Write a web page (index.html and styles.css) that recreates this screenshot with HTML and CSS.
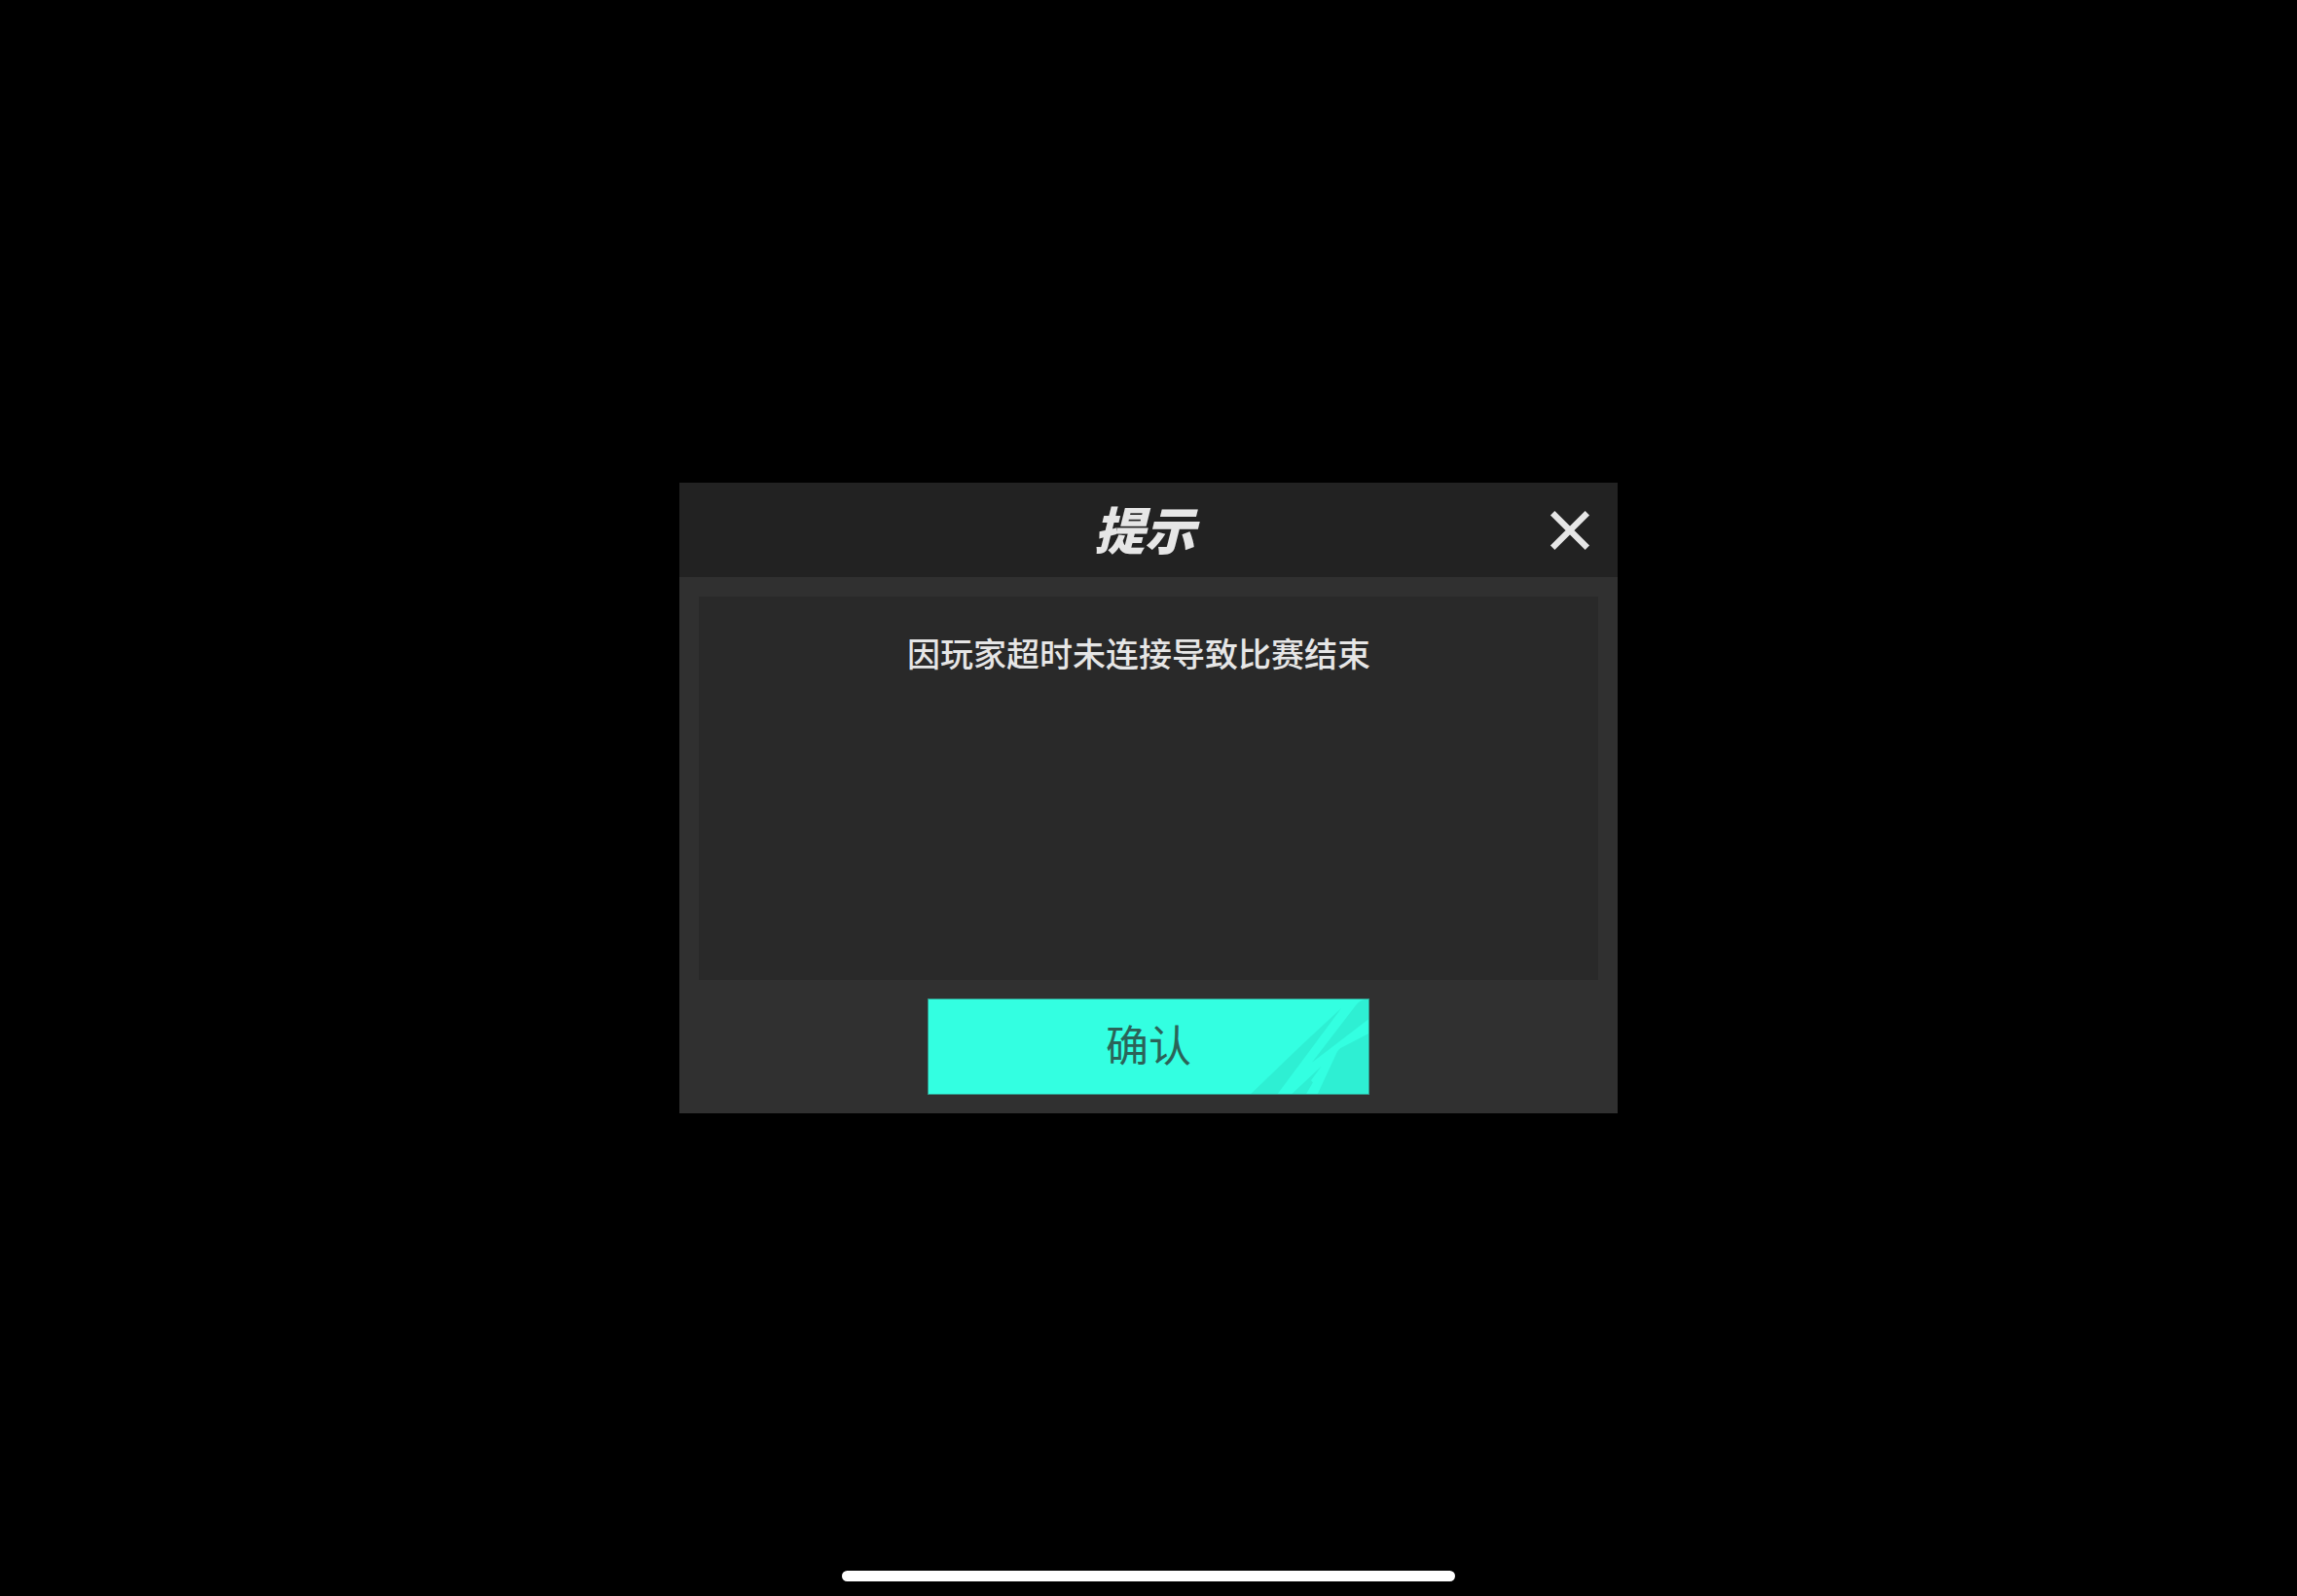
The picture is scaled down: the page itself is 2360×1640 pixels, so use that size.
FILE: index.html
```html
<!DOCTYPE html>
<html lang="zh-CN">
<head>
<meta charset="utf-8">
<meta name="viewport" content="width=device-width, initial-scale=1">
<title>提示</title>
<link rel="stylesheet" href="styles.css">
</head>
<body>
<main class="screen">
  <section class="dialog" role="dialog" aria-labelledby="dialog-title" aria-describedby="dialog-message">
    <header class="dialog-header">
      <h1 class="dialog-title" id="dialog-title">提示</h1>
      <button class="close" type="button" aria-label="关闭">
        <svg class="close-icon" viewBox="0 0 40 40" aria-hidden="true">
          <path d="M3 3L37 37M37 3L3 37" fill="none" stroke="currentColor" stroke-width="6"/>
        </svg>
      </button>
    </header>
    <div class="dialog-body">
      <div class="panel">
        <p class="message" id="dialog-message">因玩家超时未连接导致比赛结束</p>
      </div>
      <button class="confirm" type="button">
        <svg class="confirm-art" viewBox="0 0 160 99" aria-hidden="true">
          <g fill="#2eefd3">
            <path d="M37 99L90 48L132 9L65 99Z"/>
            <path d="M160 0H156Q151 1 147 6L101 66L160 21Z"/>
            <path d="M160 36L131 51Q128 53 127 56L107 99H160Z"/>
            <path d="M111 70L80 99H95L102 87L100 85Z"/>
          </g>
        </svg>
        <span class="confirm-label">确认</span>
      </button>
    </div>
  </section>
</main>
<div class="home-indicator"></div>
</body>
</html>
```
FILE: styles.css
```css
* {
  box-sizing: border-box;
}

body {
  margin: 0;
  background: #000;
  color: #e6e6e6;
  font-family: "Noto Sans CJK SC", sans-serif;
}

.screen {
  display: flex;
  align-items: center;
  justify-content: center;
  min-height: 100vh;
}

.dialog {
  width: 964px;
  max-width: 100%;
  background: #303030;
}

.dialog-header {
  display: grid;
  grid-template-columns: 98px 1fr 98px;
  align-items: center;
  height: 97px;
  background: #222;
}

.dialog-title {
  grid-column: 2;
  margin: 0;
  padding: 0 8px 4px 0;
  font-size: 52px;
  font-style: italic;
  font-weight: 900;
  line-height: 64px;
  text-align: center;
}

.close {
  display: grid;
  place-items: center;
  height: 97px;
  padding: 0;
  border: 0;
  background: none;
  color: #e6e6e6;
  cursor: pointer;
}

.close-icon {
  width: 42px;
  height: 42px;
}

.dialog-body {
  display: flex;
  flex-direction: column;
  align-items: center;
  gap: 19px;
  padding: 20px 20px 19px;
}

.panel {
  align-self: stretch;
  min-height: 394px;
  padding: 34px 20px 34px 0;
  background: #292929;
}

.message {
  margin: 0;
  font-size: 34px;
  font-weight: 500;
  line-height: 48px;
  text-align: center;
}

.confirm {
  position: relative;
  width: 454px;
  max-width: 100%;
  height: 99px;
  padding: 0 0 8px;
  border: 1px solid #31998a;
  background: #33ffe1;
  color: #2b6358;
  font-family: inherit;
  font-size: 44px;
  line-height: 64px;
  cursor: pointer;
}

.confirm-art {
  position: absolute;
  right: 0;
  bottom: 0;
  height: 100%;
}

.confirm-label {
  position: relative;
}

.home-indicator {
  position: fixed;
  bottom: 15px;
  left: 50%;
  width: 630px;
  height: 11px;
  border-radius: 6px;
  background: #fff;
  transform: translateX(-50%);
}
```
